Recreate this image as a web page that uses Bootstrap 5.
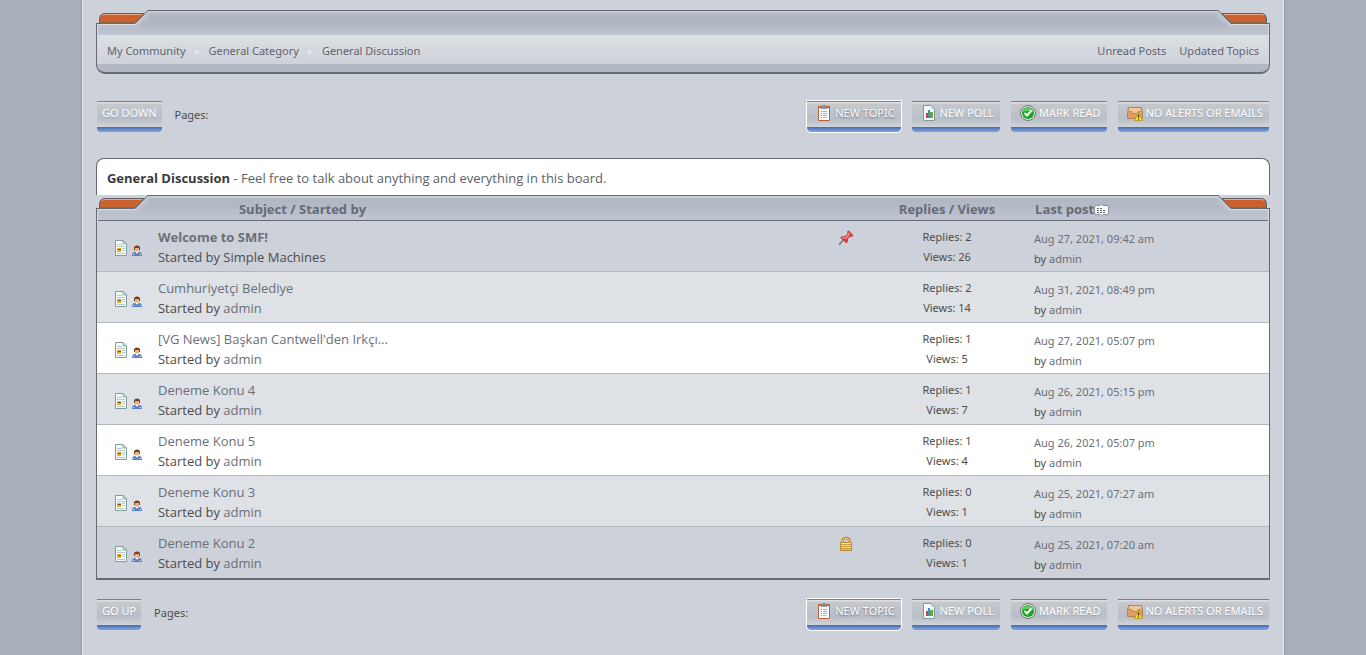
<!DOCTYPE html>
<html lang="en">
<head>
<meta charset="utf-8">
<meta name="viewport" content="width=device-width, initial-scale=1">
<title>General Discussion</title>
<link href="https://cdn.jsdelivr.net/npm/bootstrap@5.3.0/dist/css/bootstrap.min.css" rel="stylesheet">
<style>
body{background:#a7afb9;font-family:"Noto Sans","Open Sans",sans-serif;font-size:11px;line-height:20px;color:#4d4d4d}
a{color:#6b6f78;text-decoration:none}
a:hover{text-decoration:underline}
.page{width:88%;min-height:100vh;background:#cdd1d9;border:solid #e3e6ea;border-width:0 1px;box-shadow:0 0 2px #7d8590;padding:10px 13px}
.corner{position:absolute;top:0;left:0;width:53px;height:26px}
.corner-end{left:auto;right:0;transform:scaleX(-1)}
.trail{border:1px solid #646973;border-bottom-width:2px;border-radius:0 0 9px 9px;background:#b1b8c4}
.trail .corner{top:-1px;left:-1px}
.trail .corner-end{left:auto;right:-1px}
.trail-cap{height:24px;background:linear-gradient(#d0d4dc,#b0b7c3 3px,#b0b7c3 12px,#bfc6d2)}
.trail-bar{background:linear-gradient(#dde0e5,#cdd1d9);height:29px;padding:2px 10px 0;line-height:28px}
.trail-foot{height:8px}
.trail a{color:#60646d}
.trail ol{list-style:none}
.trail li+li::before{content:"";display:inline-block;border:solid transparent;border-width:3px 0 3px 5px;border-left-color:#e3e6ea;margin:0 9px}
.trail-links{gap:13px}
.strip{margin-top:26px}
.strip.low{margin-top:18px}
.bt{display:flex;align-items:center;gap:3px;height:33px;padding:0 6px 7px 9px;border:1px solid transparent;border-radius:0 0 5px 5px;color:#fff;font-size:11px;line-height:20px;text-transform:uppercase;text-shadow:0 1px 1px #9aa1ac;background:linear-gradient(#7b7f86 0 1px,#dcdee1 1px 2px,#c6c8cc 3px,#b9bfc8 18px,#cdd0d5 25px,#d5d8dc 26px,#4468b0 26px,#7d9fdd 30px,#8c95a5 31px) padding-box}
.bt.plain{padding:0 5px 7px}
.bt.active{border-color:#fff;text-shadow:0 1px 2px #666c76}
.bt svg{width:16px;height:16px}
.tools{gap:9px}
.pager{gap:12px}
.blurb{margin-top:25px;background:#fff;border:solid #646973;border-width:1px 1px 0;border-radius:8px 8px 0 0;min-height:37px;padding:9px 10px 7px;font-size:13px;font-family:"Open Sans","Noto Sans",sans-serif;color:#5c5f66}
.blurb b{color:#3a3a3a}
.topics{border-collapse:separate;border-spacing:0;table-layout:fixed;width:100%;border:1px solid #646973;border-top:0;border-bottom-width:2px}
.topics th{height:26px;padding:4px 0 0;line-height:21px;font-size:13px;font-family:"Open Sans","Noto Sans",sans-serif;color:#666b74;background:linear-gradient(#646973 1px,#d3d7de 1px,#b1b8c4 4px,#b4bbc7 12px,#bfc6d2);border-bottom:1px solid #646973}
.topics th.h-subj{padding-left:91px}
.topics th.h-last{padding-left:11px}
.topics td{height:51px;padding:6px 0 0;border-bottom:1px solid #b2b7be;vertical-align:top}
.topics tr:last-child td{border-bottom:0}
.w-icon{width:51px}.w-stat{width:154px}.w-last{width:245px}
.subj{font-size:13px;font-family:"Open Sans","Noto Sans",sans-serif}
.subj svg{margin-top:3px}
.r1 td{background:#cdd1d9}.r2 td{background:#dee1e6}.r3 td{background:#fff}
.topics td.last{padding:8px 0 0 10px}
.topics td.ico{padding:19px 0 0 16px}
.topics td.main{padding:6px 16px 0 10px}
.ico svg{display:block}
.ico svg+svg{margin:5px 0 0 3px}
</style>
</head>
<body>
<svg class="d-none" aria-hidden="true">
<symbol id="tab" viewBox="0 0 53 26"><path fill="#cdd1d9" d="M0 0H52L39 13H0z"/><path fill="#cb622d" stroke="#5d6068" d="M3.500 13V9Q4 3.500 9 3.500H48L39 13z"/><path stroke="#eba585" fill="none" d="M6 5.500Q7 4.500 9 4.500H46"/><path fill="#bfc5d0" d="M1 14H40L51 3H53V8L40 18H1z" opacity=".6"/><path fill="none" stroke="#646973" d="M.5 26V13.500H39L52 .5H53"/><path fill="none" stroke="#d9dce2" d="M1.500 26V14.500H40L52.500 1.500"/></symbol>
<symbol id="doc" viewBox="0 0 16 16"><path fill="#f5faf8" stroke="#829d9f" d="M2.500.5H10L13.500 4V15.500H2.500z"/><path fill="#c6dfd9" stroke="#829d9f" stroke-width=".7" d="M10 .5V4h3.500z"/><path stroke="#b8cdca" d="M4 4.500h5M4 6.500h8M9 8.500h3M9 10.500h3M4 13.500h8"/><path fill="#e8b51d" d="M4 8h4v4H4z"/><path stroke="#59562d" d="M5 9.500h3"/></symbol>
<symbol id="man" viewBox="0 0 10 11"><path fill="#4d84ce" d="M0 11Q0 7 3 7H7Q10 7 10 11z"/><path fill="#b9d8f6" d="M1 9h1.500v1H1zM7.500 9H9v1H7.500z"/><path fill="#fff" d="M3.500 7h3L5 10z"/><circle cx="5" cy="4" r="2.600" fill="#edb183"/><path fill="#70401f" d="M2 5V3Q2 .5 5 .5T8 3V5H7V3H3V5z"/><path stroke="#c63b24" d="M5 8v2"/></symbol>
<symbol id="pin" viewBox="0 0 16 16"><path stroke="#777b80" stroke-width="1.500" d="M1 15L6 9"/><path fill="#dc4148" stroke="#b52b38" stroke-width=".7" d="M2.500 7.500Q5 6 7 6.500L10 4L9.500 1.500L11 1L15 5.500L14 6.500L12 6.300L9.500 9Q10 11.500 8.500 13z"/><path stroke="#ff9a9b" stroke-width="1.200" fill="none" d="M4 7.500L8 8L11 4.500L11 2.500"/></symbol>
<symbol id="lock" viewBox="0 0 16 16"><path fill="none" stroke="#ad8233" stroke-width="2.500" d="M4.500 7V5Q4.500 2 8 2T11.500 5V7"/><path fill="none" stroke="#f0d58c" d="M4.500 7V5Q4.500 2 8 2T11.500 5V7"/><path fill="#edc04c" stroke="#b98a35" d="M2.500 6.500H13.500V14.500H2.500z"/><path stroke="#c99a3c" d="M3 8.500h10M3 10.500h10M3 12.500h10"/><path stroke="#f9e28d" d="M3 7.500h10M3 9.500h10M3 11.500h10"/></symbol>
<symbol id="clip" viewBox="0 0 16 16"><rect x="2" y="1" width="12" height="15" rx="1" fill="#b9633c"/><path fill="#f4f8fa" d="M3 3h10v12H3z"/><path fill="#8d939b" d="M5 2h1.500V0h3V2H11V4H5z"/><path stroke="#a3b3bf" d="M7 6.500h4M7 8.500h4M7 10.500h4M7 12.500h3"/><path stroke="#54a489" d="M5 6.500h1M5 8.500h1M5 10.500h1M5 12.500h1"/></symbol>
<symbol id="poll" viewBox="0 0 16 16"><path fill="#f4faf8" stroke="#7f9a9c" d="M2.500.5H10L13.500 4V15.500H2.500z"/><path fill="#bed8d3" d="M10 1V4h3z"/><path fill="#e13b31" d="M5 8h2v5H5z"/><path fill="#398ec6" d="M7 5h2v8H7z"/><path fill="#68a737" d="M9 7h3v6H9z"/></symbol>
<symbol id="tick" viewBox="0 0 16 16"><circle cx="8" cy="8" r="7.500" fill="#e3e6e3" stroke="#6e7672"/><circle cx="8" cy="8" r="6" fill="#18a520"/><path fill="#5bd05e" d="M2.500 7Q4 2.500 8 2.500T13.500 7Q8 5 2.500 7"/><path fill="none" stroke="#fff" stroke-width="2" d="M4.500 8L7 10.500L11.500 5.500"/></symbol>
<symbol id="mail" viewBox="0 0 16 16"><path fill="#dda066" stroke="#b97f49" d="M1.500 2.500H14.500L15.500 8V13.500H.5V8z"/><path fill="#f0c79a" d="M2 3H14V7H11L10 9H6L5 7H2z"/><path fill="#c98545" d="M2 6h3l1 2h4l1-2h3v1h-2.500l-1 2h-5l-1-2H2z"/><path fill="#f7df34" stroke="#b5931b" stroke-width=".8" d="M11.500 7L15.500 15.500H7.500z"/><path stroke="#33300d" stroke-width="1.300" d="M11.500 9.500v3M11.500 13.500v1"/></symbol>
<symbol id="bubble" viewBox="0 0 16 14"><path fill="#fafafa" stroke="#898e95" d="M2.500 2.500H6L7.500 .8L9 2.500H13.500Q14.500 2.500 14.500 4V10Q14.500 11.500 13.500 11.500H9L7.500 13.200L6 11.500H2.500Q.5 11.500 .5 10V4Q.5 2.500 2.500 2.500z"/><path stroke="#656970" stroke-dasharray="2 1" d="M3 5.500h6M3 7.500h9M3 9.500h9"/></symbol>
</svg>
<div class="page mx-auto">
<nav class="trail position-relative" aria-label="Breadcrumb">
<div class="trail-cap"></div>
<svg class="corner"><use href="#tab"/></svg><svg class="corner corner-end"><use href="#tab"/></svg>
<div class="trail-bar d-flex justify-content-between">
<ol class="d-flex m-0 p-0"><li><a href="#">My Community</a></li><li><a href="#">General Category</a></li><li><a href="#">General Discussion</a></li></ol>
<div class="trail-links d-flex"><a href="#">Unread Posts</a><a href="#">Updated Topics</a></div>
</div>
<div class="trail-foot"></div>
</nav>
<div class="strip d-flex justify-content-between">
<div class="pager d-flex align-items-center"><button class="bt plain">Go Down</button><span class="pb-1">Pages:</span></div>
<div class="tools d-flex"><button class="bt active"><svg><use href="#clip"/></svg>New Topic</button><button class="bt"><svg><use href="#poll"/></svg>New Poll</button><button class="bt"><svg><use href="#tick"/></svg>Mark Read</button><button class="bt"><svg><use href="#mail"/></svg>No alerts or emails</button></div>
</div>
<div class="blurb"><b>General Discussion</b> - Feel free to talk about anything and everything in this board.</div>
<div class="position-relative">
<table class="topics">
<colgroup><col class="w-icon"><col><col class="w-stat"><col class="w-last"></colgroup>
<thead><tr><th></th><th class="h-subj">Subject / Started by</th><th class="text-center">Replies / Views</th><th class="h-last"><span class="d-flex align-items-center">Last post<svg width="16" height="14"><use href="#bubble"/></svg></span></th></tr></thead>
<tbody id="rows"></tbody>
</table>
<svg class="corner"><use href="#tab"/></svg><svg class="corner corner-end"><use href="#tab"/></svg>
</div>
<div class="strip low d-flex justify-content-between">
<div class="pager d-flex align-items-center"><button class="bt plain">Go Up</button><span class="pb-1">Pages:</span></div>
<div class="tools d-flex"><button class="bt active"><svg><use href="#clip"/></svg>New Topic</button><button class="bt"><svg><use href="#poll"/></svg>New Poll</button><button class="bt"><svg><use href="#tick"/></svg>Mark Read</button><button class="bt"><svg><use href="#mail"/></svg>No alerts or emails</button></div>
</div>
</div>
<script>
const topics=[
["r1","<b>Welcome to SMF!</b>","",2,26,"Aug 27, 2021, 09:42 am","pin"],
["r2","Cumhuriyetçi Belediye","admin",2,14,"Aug 31, 2021, 08:49 pm"],
["r3","[VG News] Başkan Cantwell'den Irkçı...","admin",1,5,"Aug 27, 2021, 05:07 pm"],
["r2","Deneme Konu 4","admin",1,7,"Aug 26, 2021, 05:15 pm"],
["r3","Deneme Konu 5","admin",1,4,"Aug 26, 2021, 05:07 pm"],
["r2","Deneme Konu 3","admin",0,1,"Aug 25, 2021, 07:27 am"],
["r1","Deneme Konu 2","admin",0,1,"Aug 25, 2021, 07:20 am","lock"]];
document.getElementById("rows").innerHTML=topics.map(([cls,title,by,replies,views,when,flag])=>`<tr class="${cls}">
<td class="ico"><div class="d-flex"><svg width="16" height="16"><use href="#doc"/></svg><svg width="10" height="11"><use href="#man"/></svg></div></td>
<td class="main"><div class="d-flex justify-content-between subj"><div><a href="#">${title}</a><br>Started by ${by?`<a href="#">${by}</a>`:"Simple Machines"}</div>${flag?`<svg width="16" height="16"><use href="#${flag}"/></svg>`:""}</div></td>
<td class="text-center">Replies: ${replies}<br>Views: ${views}</td>
<td class="last"><a href="#">${when}</a><br>by <a href="#">admin</a></td></tr>`).join("");
</script>
<script src="https://cdn.jsdelivr.net/npm/bootstrap@5.3.0/dist/js/bootstrap.bundle.min.js"></script>
</body>
</html>
